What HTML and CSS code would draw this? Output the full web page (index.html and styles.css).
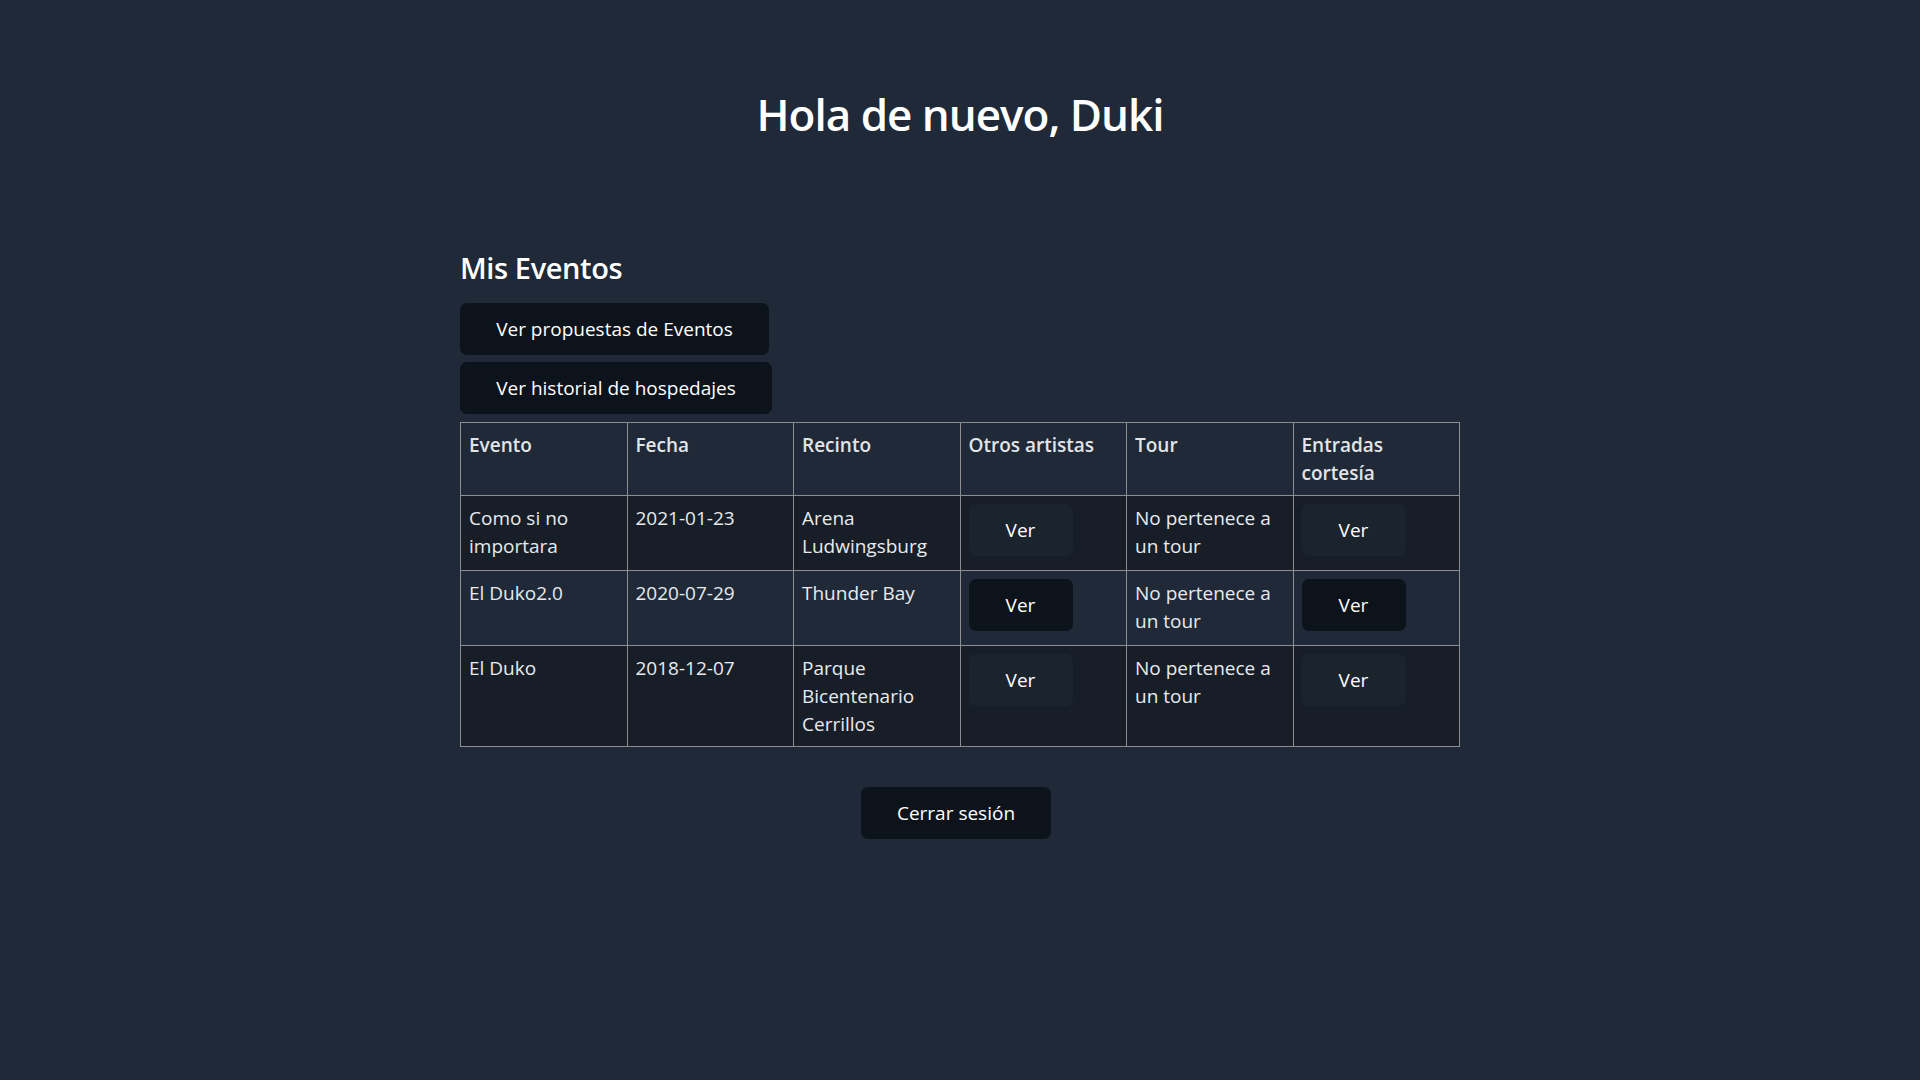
FILE: index.html
```html
<!DOCTYPE html>
<html lang="es">
<head>
<meta charset="utf-8">
<title>Mis Eventos</title>
<link rel="stylesheet" href="styles.css">
</head>
<body>
<main class="page">
  <h1 class="greeting">Hola de nuevo, Duki</h1>
  <section class="events">
    <h2 class="events-title">Mis Eventos</h2>
    <div class="actions">
      <button class="btn btn-dark btn-wide1">Ver propuestas de Eventos</button>
      <button class="btn btn-dark btn-wide2">Ver historial de hospedajes</button>
    </div>
    <table class="events-table">
      <thead>
        <tr>
          <th>Evento</th>
          <th>Fecha</th>
          <th>Recinto</th>
          <th>Otros artistas</th>
          <th>Tour</th>
          <th>Entradas cortesía</th>
        </tr>
      </thead>
      <tbody>
        <tr class="row-odd">
          <td>Como si no importara</td>
          <td>2021-01-23</td>
          <td>Arena Ludwingsburg</td>
          <td><button class="btn btn-soft cell-btn">Ver</button></td>
          <td>No pertenece a un tour</td>
          <td><button class="btn btn-soft cell-btn">Ver</button></td>
        </tr>
        <tr class="row-even">
          <td>El Duko2.0</td>
          <td>2020-07-29</td>
          <td>Thunder Bay</td>
          <td><button class="btn btn-dark cell-btn">Ver</button></td>
          <td>No pertenece a un tour</td>
          <td><button class="btn btn-dark cell-btn">Ver</button></td>
        </tr>
        <tr class="row-odd">
          <td>El Duko</td>
          <td>2018-12-07</td>
          <td>Parque Bicentenario Cerrillos</td>
          <td><button class="btn btn-soft cell-btn">Ver</button></td>
          <td>No pertenece a un tour</td>
          <td><button class="btn btn-soft cell-btn">Ver</button></td>
        </tr>
      </tbody>
    </table>
  </section>
  <div class="logout">
    <button class="btn btn-dark btn-logout">Cerrar sesión</button>
  </div>
</main>
</body>
</html>
```

FILE: styles.css
```css
html, body {
  margin: 0;
  padding: 0;
  background: #1f2937;
}
body {
  font-family: "Open Sans", "Noto Sans", sans-serif;
  color: #f3f4f6;
  min-height: 1080px;
}
.page {
  display: flex;
  flex-direction: column;
  align-items: center;
  padding-top: 86px;
}
.greeting {
  margin: 0;
  font-size: 44px;
  line-height: 56px;
  font-weight: 600;
  color: #ffffff;
  letter-spacing: -1px;
}
.events {
  width: 1000px;
  margin-top: 108px;
  display: flex;
  flex-direction: column;
}
.events-title {
  margin: 0;
  font-size: 29px;
  line-height: 36px;
  font-weight: 600;
  color: #ffffff;
  letter-spacing: -0.4px;
}
.actions {
  display: flex;
  flex-direction: column;
  align-items: flex-start;
  gap: 7px;
  margin-top: 17px;
}
.btn {
  font-family: inherit;
  font-size: 19px;
  line-height: 28px;
  color: #ffffff;
  border: none;
  border-radius: 7px;
  padding: 12px 38px;
  cursor: pointer;
}
.btn-dark {
  background: #0d131a;
}
.btn-soft {
  background: #1b232d;
}
.btn-wide1 { width: 309px; padding: 12px 0; }
.btn-wide2 { width: 312px; padding: 12px 0; }
.events-table {
  margin-top: 8px;
  width: 1000px;
  border-collapse: collapse;
  table-layout: fixed;
  font-size: 19px;
  line-height: 28px;
  color: #e8eaed;
}
.events-table th,
.events-table td {
  border: 1px solid #8b8d90;
  padding: 8px;
  text-align: left;
  vertical-align: top;
}
.events-table th {
  font-weight: 600;
  color: #e2e4e7;
}
.row-odd {
  background: #171e28;
}
.row-even {
  background: #1f2937;
}
.cell-btn {
  display: block;
  width: 104px;
  padding: 12px 0;
  margin-bottom: 6px;
}
.logout {
  margin-top: 40px;
  display: flex;
  justify-content: center;
  margin-right: 8px;
}
.btn-logout {
  width: 190px;
  padding: 12px 0;
}
```
